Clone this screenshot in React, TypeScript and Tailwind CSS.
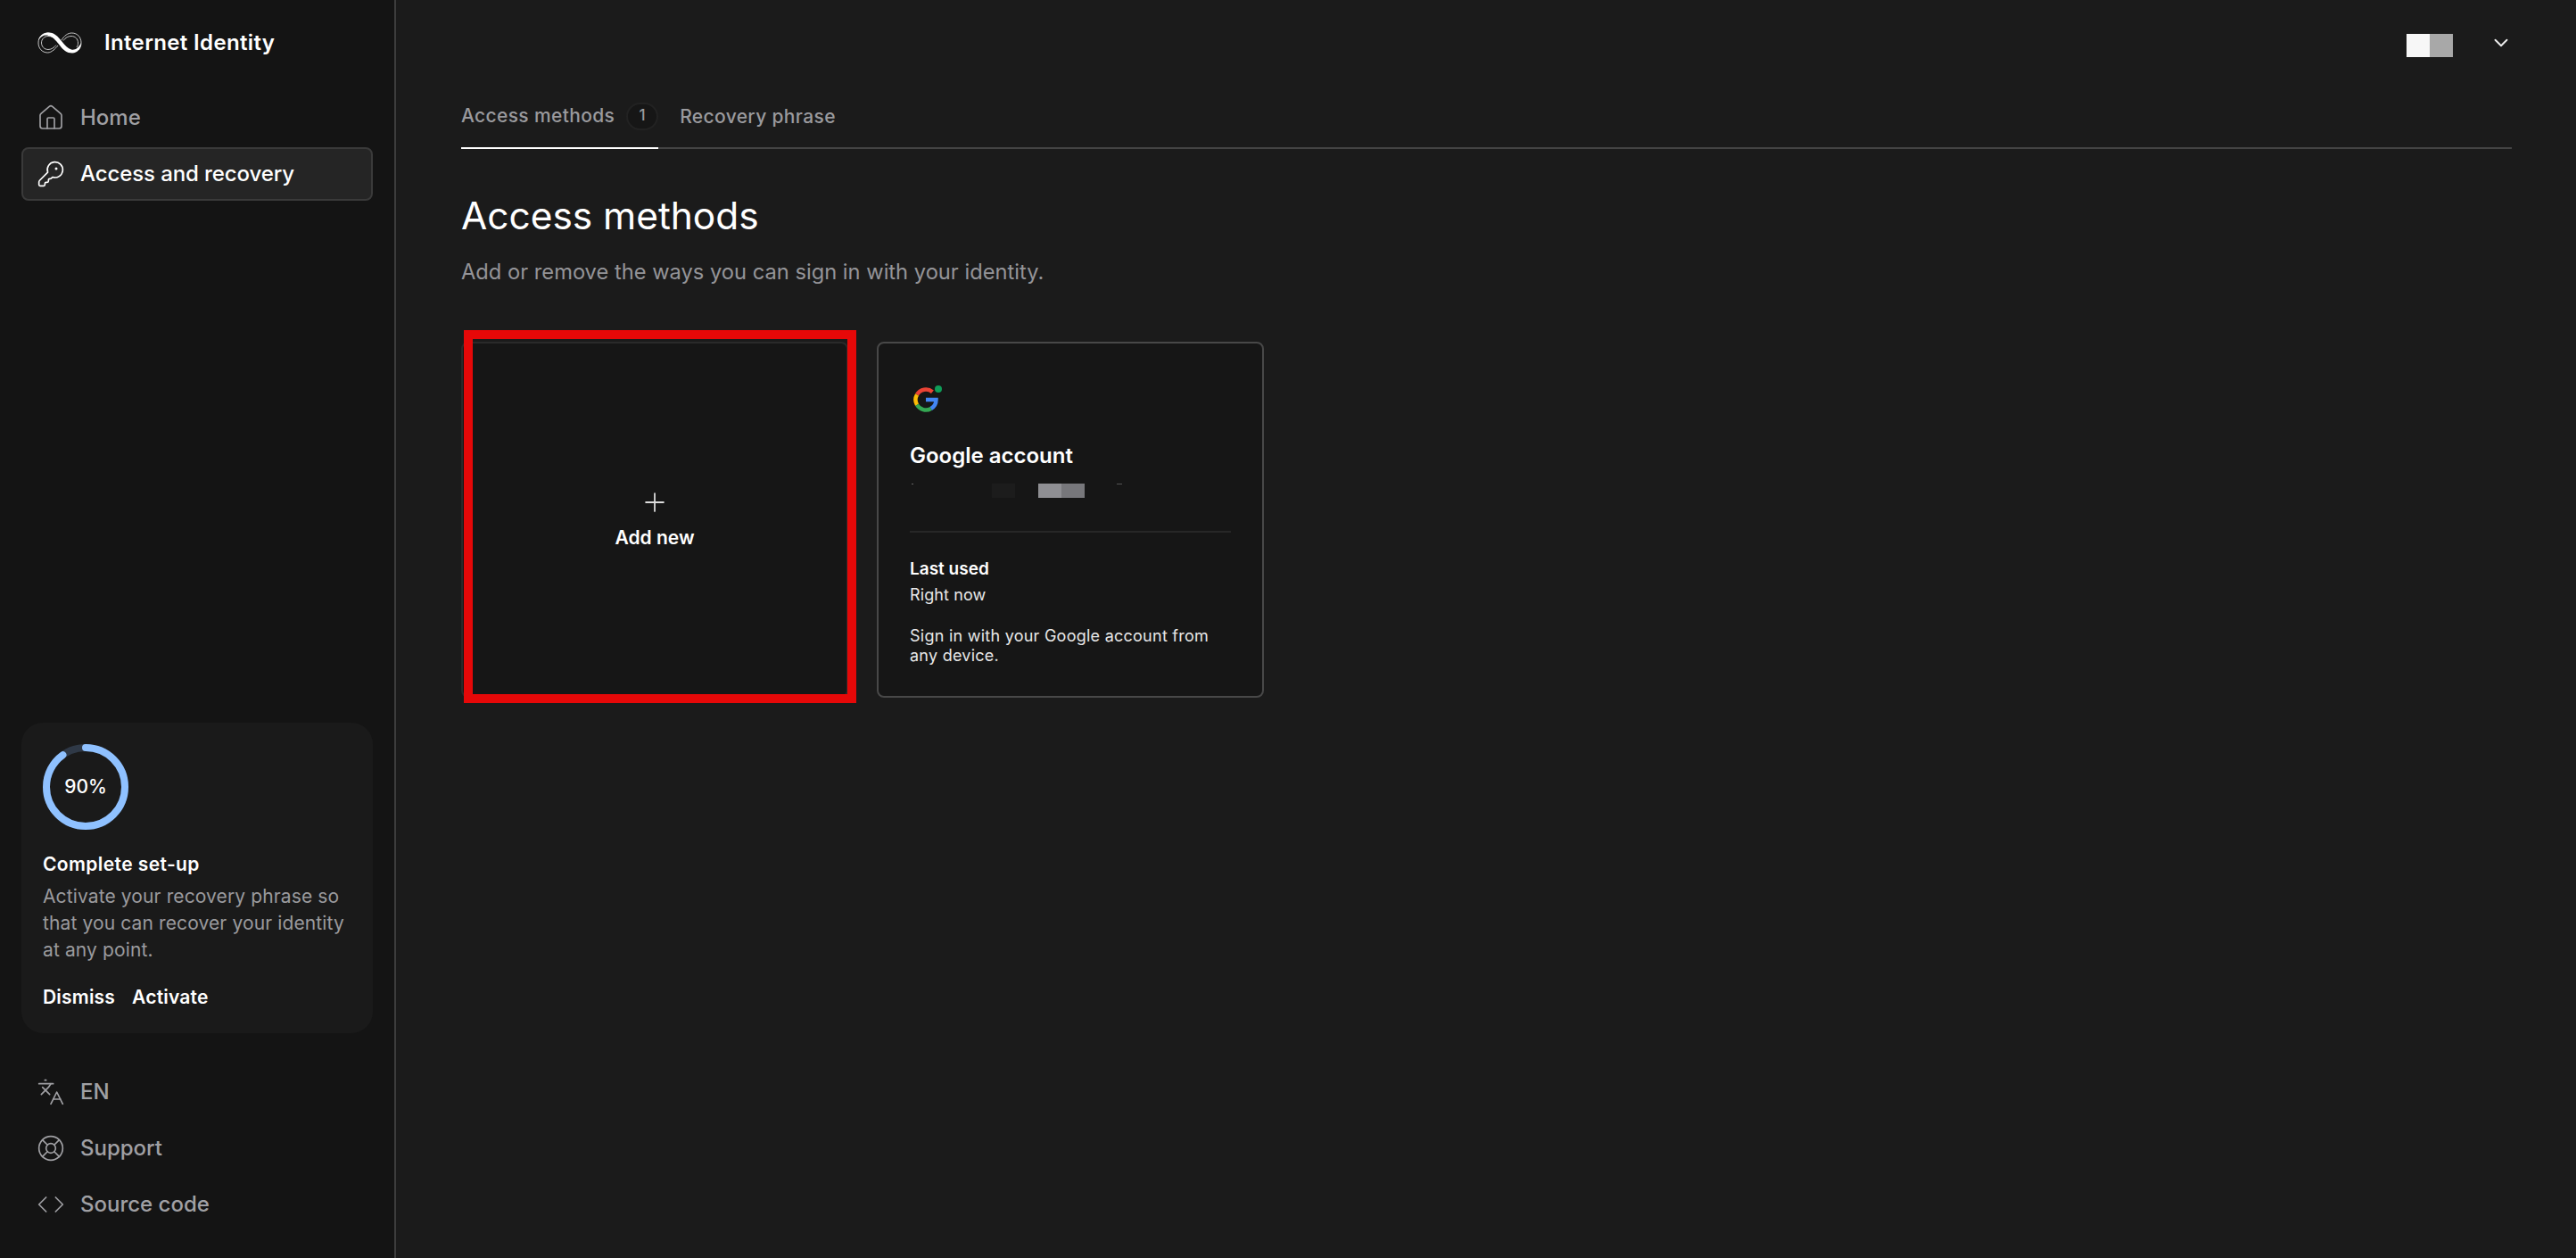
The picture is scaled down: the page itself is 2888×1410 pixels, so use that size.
import { ChevronDown, Code, House, KeyRound, Languages, LifeBuoy, Plus } from 'lucide-react';

function Logo() {
  return (
    <svg width="50" height="24" viewBox="0 0 50 24" fill="none" className="shrink-0">
      <g stroke="#d8d8d8" strokeWidth="0.9">
        <path d="M25 12C20 6 16 1 11.5 1C5 1 1 6 1 12C1 18 5 23 11.5 23C16 23 20.5 18 23 15" />
        <path d="M22 9C19 6 15.5 4.5 12 4.5C7.5 4.5 4.5 8 4.5 12C4.5 16 7.5 19.5 12 19.5C15.5 19.5 18.5 17.5 21 14.5" />
        <path d="M27 9C30 4 34 1 38.5 1C45 1 49 6 49 12C49 15 48 18 46 20" />
        <path d="M29 9.5C31.5 6 34.5 4.5 38 4.5C42.5 4.5 45.5 8 45.5 12C45.5 14 45 15.5 44 17" />
      </g>
      <path
        d="M1 9C3 3 8 0.5 13 0.5C19 0.5 23 5 27 10C31 15 34 18.5 38 19.5C42 20.5 46 18 49 12C49 18 45 23.5 39 23.5C33 23.5 29 20 25.5 15.5C22 11 18 5.5 12.5 4C8 2.5 4 4.5 1 9Z"
        fill="#fff"
      />
    </svg>
  );
}

function GoogleIcon() {
  return (
    <svg width="34" height="34" viewBox="0 0 34 34" fill="none" strokeWidth="4.5" className="ml-[4px]">
      <path d="M21.39 7.19A11.5 11.5 0 0 0 4.04 10.25" stroke="#ea4335" />
      <path d="M4.04 10.25A11.5 11.5 0 0 0 4.04 21.75" stroke="#fbbc05" />
      <path d="M4.04 21.75A11.5 11.5 0 0 0 19.75 25.96" stroke="#34a853" />
      <path d="M19.75 25.96A11.5 11.5 0 0 0 25.5 16L14 16" stroke="#4285f4" />
      <circle cx="28" cy="4" r="4" fill="#0f9d58" />
    </svg>
  );
}

function ProgressRing() {
  // 90% of the circle, clockwise from the top
  const radius = 44;
  const circumference = 2 * Math.PI * radius;
  return (
    <div className="relative w-[96px] h-[96px]">
      <svg width="96" height="96" viewBox="0 0 96 96" fill="none" className="-rotate-90">
        <circle cx="48" cy="48" r={radius} stroke="#2f3947" strokeWidth="8" />
        <circle
          cx="48"
          cy="48"
          r={radius}
          stroke="#8fc1ff"
          strokeWidth="8"
          strokeLinecap="round"
          strokeDasharray={`${circumference * 0.9} ${circumference}`}
        />
      </svg>
      <span className="absolute inset-0 flex items-center justify-center text-[21px] font-medium text-white">90%</span>
    </div>
  );
}

export default function App() {
  const footerLinks = [
    { label: 'EN', icon: Languages },
    { label: 'Support', icon: LifeBuoy },
    { label: 'Source code', icon: Code },
  ];

  return (
    <div className="flex h-screen bg-[#1b1b1b] font-['Inter',sans-serif] overflow-hidden">
      {/* Sidebar */}
      <aside className="flex flex-col w-[444px] shrink-0 bg-[#141414] border-r-2 border-[#3d3d3d] pl-[24px] pr-[24px]">
        <div className="flex items-center h-[96px] pl-[18px] gap-[25px]">
          <Logo />
          <span className="text-[24px] font-semibold text-white tracking-[0.35px]">Internet Identity</span>
        </div>

        <nav className="flex flex-col gap-[3px] mt-[6px]">
          <a className="flex items-center h-[60px] pl-[17px] gap-[17px] text-[24px] font-medium text-[#a0a0a4]">
            <House size={32} strokeWidth={1.25} />
            <span>Home</span>
          </a>
          <a className="flex items-center h-[60px] pl-[15px] gap-[17px] text-[24px] font-medium tracking-[-0.1px] text-white bg-[#252525] border-2 border-[#3a3a3a] rounded-lg">
            <KeyRound size={32} strokeWidth={1.25} />
            <span>Access and recovery</span>
          </a>
        </nav>

        <div className="mt-auto flex flex-col h-[348px] rounded-[24px] bg-[#1a1a1a] pl-[24px] pr-[16px] pt-[24px]">
          <ProgressRing />
          <h3 className="mt-[24px] text-[21px] leading-[30px] font-semibold tracking-[0.4px] text-white">Complete set-up</h3>
          <p className="mt-[6px] text-[21px] leading-[30px] tracking-[0.12px] text-[#9a9a9e]">
            Activate your recovery phrase so that you can recover your identity at any point.
          </p>
          <div className="flex gap-[19px] mt-[23px] text-[21px] leading-[30px] font-semibold tracking-[0.2px] text-white">
            <button>Dismiss</button>
            <button>Activate</button>
          </div>
        </div>

        <div className="flex flex-col gap-[3px] mt-[36px] mb-[30px]">
          {footerLinks.map((item) => (
            <a key={item.label} className="flex items-center h-[60px] pl-[17px] gap-[17px] text-[24px] font-medium text-[#a0a0a4]">
              <item.icon size={32} strokeWidth={1.25} />
              <span>{item.label}</span>
            </a>
          ))}
        </div>
      </aside>

      {/* Main */}
      <main className="flex-1 pl-[73px] pr-[72px]">
        <header className="flex justify-end items-center h-[96px] pt-[6px]">
          <div className="flex h-[26px]">
            <div className="w-[26px] bg-[#f7f7f7]" />
            <div className="w-[26px] bg-[#a8a8a8]" />
          </div>
          <ChevronDown size={26} strokeWidth={1.75} className="ml-[41px] -mr-[1px] mb-[6px] text-[#eeeeee]" />
        </header>

        <div className="flex items-end h-[71px] border-b-2 border-[#444444]">
          <button className="flex items-center gap-[13px] h-[70px] -mb-[2px] pb-[2px] border-b-2 border-white text-[21px] font-medium tracking-[0.35px] text-[#9a9a9e]">
            <span>Access methods</span>
            <span className="flex items-center justify-center w-[36px] h-[31px] rounded-full bg-[#161616] border-2 border-[#222222] text-[17px]">1</span>
          </button>
          <button className="flex items-center h-[70px] -mb-[2px] pb-[2px] ml-[24px] text-[21px] font-medium tracking-[0.35px] text-[#9a9a9e]">
            Recovery phrase
          </button>
        </div>

        <h1 className="mt-[48px] text-[42.4px] leading-[54px] font-normal text-white">Access methods</h1>
        <p className="mt-[18px] text-[23.7px] leading-[36px] text-[#949498]">Add or remove the ways you can sign in with your identity.</p>

        <div className="flex gap-[32px] mt-[60px]">
          <div className="relative flex flex-col items-center justify-center w-[434px] h-[399px] rounded-lg bg-[#161616] border-2 border-[#2a2a2a]">
            <Plus size={34} strokeWidth={1.25} className="text-[#dddddd]" />
            <span className="mt-[7px] text-[21px] font-semibold text-white">Add new</span>
            {/* Red annotation frame */}
            <div className="absolute -top-[15px] left-[1px] -right-[11px] -bottom-[8px] border-[10px] border-[#e60808]" />
          </div>

          <div className="flex flex-col w-[434px] h-[399px] rounded-lg bg-[#161616] border-2 border-[#484848] px-[35px] pt-[47px]">
            <GoogleIcon />
            <h2 className="mt-[29px] text-[24px] leading-[32px] font-semibold text-white">Google account</h2>
            <div className="flex mt-[15px] h-[16px]">
              <div className="w-[2px] h-[1px] ml-[2px] bg-[#666666]" />
              <div className="w-[26px] ml-[88px] bg-[#1c1c1c]" />
              <div className="w-[26px] ml-[26px] bg-[#8f8f93]" />
              <div className="w-[26px] bg-[#77777b]" />
              <div className="w-[6px] h-[1px] ml-[36px] bg-[#555555]" />
            </div>
            <div className="mt-[37px] border-t-2 border-[#272727]" />
            <div className="mt-[27px] text-[19px] leading-[28px] font-semibold text-white">Last used</div>
            <div className="mt-[1px] text-[18px] leading-[28px] tracking-[0.1px] text-[#e8e8e8]">Right now</div>
            <p className="mt-[21px] text-[18px] leading-[22px] tracking-[0.25px] text-[#e8e8e8]">Sign in with your Google account from any device.</p>
          </div>
        </div>
      </main>
    </div>
  );
}
